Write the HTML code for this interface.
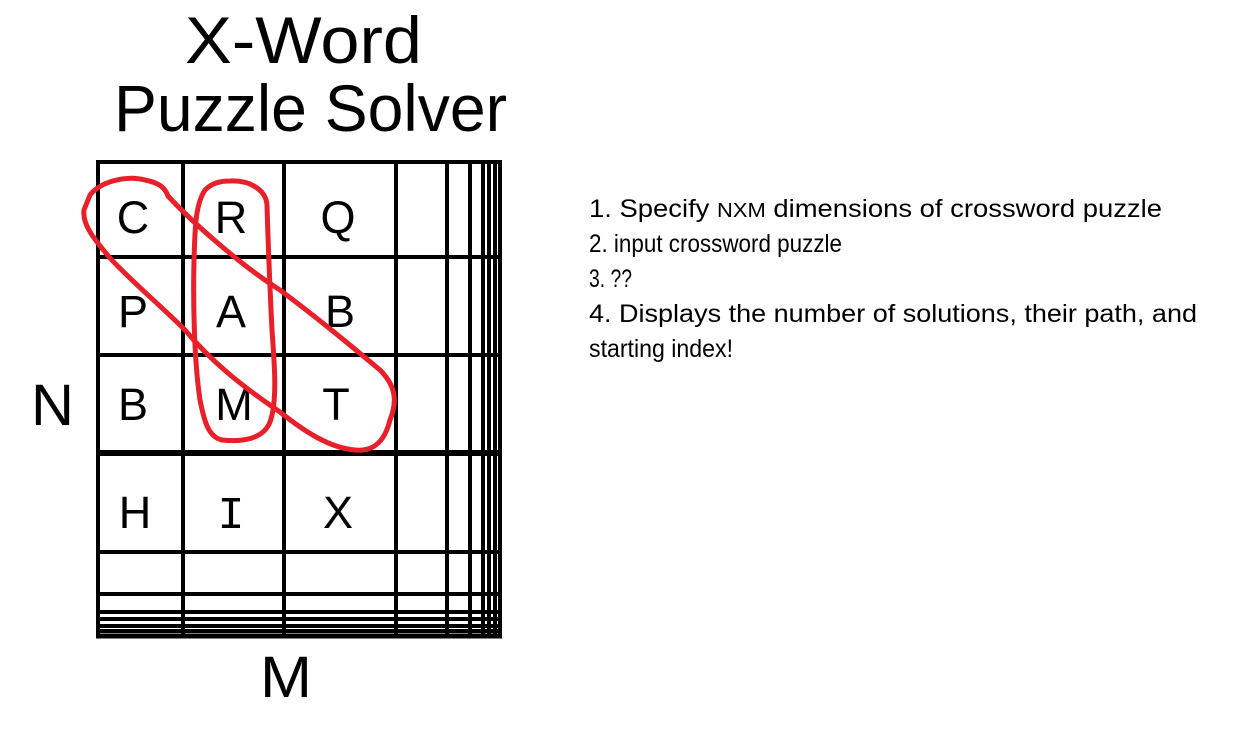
<!DOCTYPE html>
<html><head><meta charset="utf-8"><style>html,body{margin:0;padding:0;background:#fff;overflow:hidden}svg{display:block}</style></head>
<body>
<svg width="1233" height="745" viewBox="0 0 1233 745" xmlns="http://www.w3.org/2000/svg" font-family="Liberation Sans, sans-serif">
<rect width="1233" height="745" fill="#fff"/>
<text x="185" y="63" font-size="66" textLength="237" lengthAdjust="spacingAndGlyphs">X-Word</text>
<text x="114" y="131" font-size="66" textLength="393" lengthAdjust="spacingAndGlyphs">Puzzle Solver</text>
<text x="31" y="425" font-size="58" textLength="43" lengthAdjust="spacingAndGlyphs">N</text>
<text x="260" y="697" font-size="58" textLength="52" lengthAdjust="spacingAndGlyphs">M</text>
<g stroke="#000" fill="none">
<g stroke-width="4">
<line x1="98" y1="160" x2="98" y2="638"/>
<line x1="183" y1="160" x2="183" y2="638"/>
<line x1="284" y1="160" x2="284" y2="638"/>
<line x1="396" y1="160" x2="396" y2="638"/>
<line x1="447" y1="160" x2="447" y2="638"/>
<line x1="470" y1="160" x2="470" y2="638"/>
<line x1="483" y1="160" x2="483" y2="638"/>
<line x1="489" y1="160" x2="489" y2="638"/>
<line x1="495" y1="160" x2="495" y2="638"/>
<line x1="500" y1="160" x2="500" y2="638"/>
<line x1="96" y1="162" x2="502" y2="162"/>
<line x1="96" y1="257" x2="502" y2="257"/>
<line x1="96" y1="355" x2="502" y2="355"/>
<line x1="96" y1="552" x2="502" y2="552"/>
<line x1="96" y1="594" x2="502" y2="594"/>
<line x1="96" y1="612" x2="502" y2="612"/>
<line x1="96" y1="619" x2="502" y2="619"/>
<line x1="96" y1="626" x2="502" y2="626"/>
<line x1="96" y1="631" x2="502" y2="631"/>
</g>
<line x1="96" y1="453" x2="502" y2="453" stroke-width="6"/>
<line x1="96" y1="636" x2="502" y2="636" stroke-width="5"/>
</g>
<g font-size="45" text-anchor="middle">
<text x="133" y="233">C</text><text x="231" y="233">R</text><text x="338" y="233">Q</text>
<text x="133" y="327">P</text><text x="231" y="327">A</text><text x="340" y="327">B</text>
<text x="133" y="420">B</text><text x="234" y="420">M</text><text x="336" y="420">T</text>
<text x="135" y="528">H</text><text x="231" y="528" font-family="Liberation Mono, monospace">I</text><text x="338" y="528">X</text>
</g>
<g fill="none" stroke="#e8202a" stroke-width="5" stroke-linejoin="round" stroke-linecap="round">
<path d="M90 195 C100 182 125 175 145 180 C160 183 165 188 168 196 C190 220 240 265 280 290 C320 320 350 345 380 370 C395 385 398 400 390 420 C385 440 375 452 355 450 C330 448 305 432 280 412 C240 385 210 360 185 330 C160 305 130 280 110 258 C95 240 82 225 84 210 Z"/>
<path d="M230 181 C250 180 266 190 267 205 C268 240 270 290 272 330 C274 360 278 400 270 422 C263 440 240 442 222 440 C208 437 204 420 200 400 C194 360 193 300 194 260 C195 230 195 205 205 190 C212 183 220 181 230 181 Z"/>
</g>
<g font-size="25">
<text x="589" y="217" textLength="573" lengthAdjust="spacingAndGlyphs">1. Specify <tspan font-size="20">NXM</tspan> dimensions of crossword puzzle</text>
<text x="589" y="252" textLength="253" lengthAdjust="spacingAndGlyphs">2. input crossword puzzle</text>
<text x="589" y="287" textLength="43" lengthAdjust="spacingAndGlyphs">3. ??</text>
<text x="589" y="322" textLength="608" lengthAdjust="spacingAndGlyphs">4. Displays the number of solutions, their path, and</text>
<text x="589" y="357" textLength="144" lengthAdjust="spacingAndGlyphs">starting index!</text>
</g>
</svg>
</body></html>
